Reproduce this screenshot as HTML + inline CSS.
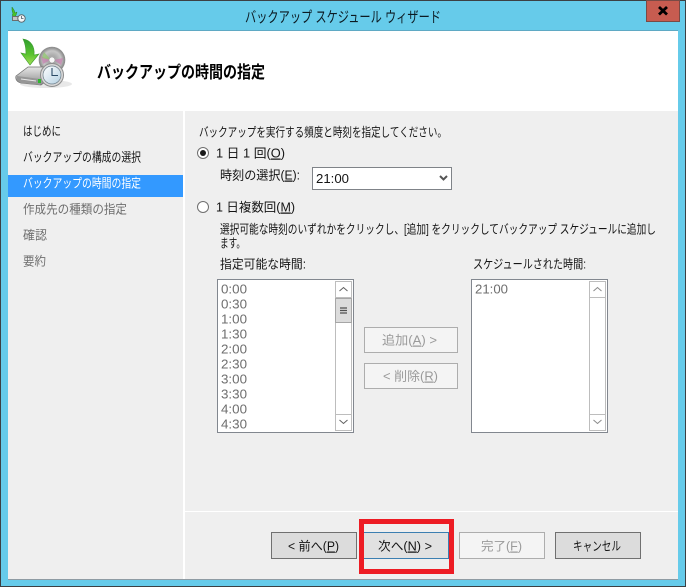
<!DOCTYPE html>
<html><head><meta charset="utf-8">
<style>
html,body{margin:0;padding:0;width:686px;height:587px;overflow:hidden;background:#66cbea}
svg{display:block}
text{font-family:"Liberation Sans","Noto Sans CJK JP",sans-serif;font-size:12.5px;fill:#141414;white-space:pre}
.g{fill:#6e6e6e}
.d{fill:#9a9a9a}
tspan.u{text-decoration:underline}
</style></head><body>
<svg width="686" height="587" viewBox="0 0 686 587" xmlns="http://www.w3.org/2000/svg">
<defs>
<linearGradient id="ar" x1="0" y1="0" x2="0" y2="1"><stop offset="0" stop-color="#2f9e2f"/><stop offset=".6" stop-color="#5cc42f"/><stop offset="1" stop-color="#a5e05a"/></linearGradient>
<linearGradient id="dr" x1="0" y1="0" x2="0" y2="1"><stop offset="0" stop-color="#e6e6e6"/><stop offset="1" stop-color="#8d8d8d"/></linearGradient>
<radialGradient id="cd"><stop offset="0" stop-color="#f2f2f2"/><stop offset=".3" stop-color="#a8a8a8"/><stop offset=".7" stop-color="#c6c6c6"/><stop offset="1" stop-color="#858585"/></radialGradient>
<linearGradient id="cl" x1="0" y1="0" x2="1" y2="1"><stop offset="0" stop-color="#ffffff"/><stop offset="1" stop-color="#b4d0e2"/></linearGradient>
</defs>

<!-- window frame -->
<rect width="686" height="587" fill="#66cbea"/>
<rect x="0" y="0" width="686" height="1" fill="#3c4043"/>
<rect x="0" y="0" width="1" height="587" fill="#3c4043"/>
<rect x="685" y="0" width="1" height="587" fill="#3c4043"/>
<rect x="0" y="586" width="686" height="1" fill="#3c4043"/>
<rect x="8" y="30" width="670" height="1" fill="#5fa9c4"/>
<rect x="8" y="579" width="670" height="1" fill="#8f9ba3"/>

<!-- client -->
<rect x="8" y="31" width="670" height="80" fill="#ffffff"/>
<rect x="8" y="111" width="670" height="468" fill="#ffffff"/>
<rect x="8" y="111" width="175" height="468" fill="#efefef"/>
<rect x="185" y="111" width="493" height="400" fill="#efefef"/>
<rect x="185" y="512" width="493" height="67" fill="#efefef"/>

<!-- close button -->
<rect x="646.500" y="0.500" width="33" height="21" fill="#c75c50" stroke="#7a4a45"/>
<path d="M659 7l8 7.500M667 7l-8 7.500" stroke="#000" stroke-width="2.800" fill="none"/>

<!-- small title icon -->
<path d="M12 7l2 3 1 3 2-1-2 6-3-3 1-1-1-4z" fill="#49c22a" stroke="#2a7a1a" stroke-width=".5"/>
<rect x="12.500" y="16.500" width="8" height="4" fill="#c4c4c4" stroke="#6d6d6d"/>
<circle cx="21.500" cy="18.500" r="3.700" fill="#f2f6f8" stroke="#5f6a70"/>
<path d="M21.500 16v2.500h2" stroke="#4a5a66" stroke-width=".8" fill="none"/>

<!-- title -->
<text x="245" y="22" style="font-size:15px;fill:#0c1a22" textLength="196" lengthAdjust="spacingAndGlyphs">バックアップ スケジュール ウィザード</text>

<!-- large icon -->
<ellipse cx="46" cy="84" rx="26" ry="4" fill="#d9d9d9" opacity=".6"/>
<circle cx="52" cy="60" r="13" fill="url(#cd)" stroke="#8f8f8f" stroke-width=".6"/>
<path d="M41 56l9 4-7 4zM63 58l-9 2 7 5z" fill="#c87fb0" opacity=".7"/>
<path d="M44 52l7 8-9-2z" fill="#8ec96b" opacity=".7"/>
<circle cx="52" cy="60" r="3" fill="#f8f8f8" stroke="#999" stroke-width=".6"/>
<path d="M23 39c8 1 12 8 11 16l5-1-9 11-9-12 5 1c0-6-1-11-3-15z" fill="url(#ar)" stroke="#3c9a2c" stroke-width=".6"/>
<path d="M16 76l12-9 24 0 0 10-11 8-20-2c-4-1-6-4-5-7z" fill="url(#dr)" stroke="#6f6f6f" stroke-width=".7"/>
<path d="M17 76l23 3 0 6-19-2c-3-1-5-4-4-7z" fill="#969696"/>
<path d="M21 79l15 2" stroke="#e8e8e8" stroke-width="1" fill="none"/>
<rect x="38" y="79" width="3" height="4" fill="#2eb82e"/>
<circle cx="52" cy="75" r="11.500" fill="#d8d8d8" stroke="#8c8c8c"/>
<circle cx="52" cy="75" r="9" fill="url(#cl)" stroke="#6e7f8a" stroke-width=".7"/>
<path d="M52 68v7.500h6" stroke="#2a4a66" stroke-width="1.100" fill="none"/>

<!-- heading -->
<text x="97" y="78" style="font-size:17px;font-weight:bold;fill:#000" textLength="168" lengthAdjust="spacingAndGlyphs">バックアップの時間の指定</text>

<!-- nav -->
<rect x="8" y="175" width="175" height="22" fill="#3399ff"/>
<text x="23" y="135.500" textLength="38" lengthAdjust="spacingAndGlyphs">はじめに</text>
<text x="23" y="161.500" textLength="118" lengthAdjust="spacingAndGlyphs">バックアップの構成の選択</text>
<text x="23" y="187.500" style="fill:#fff" textLength="118" lengthAdjust="spacingAndGlyphs">バックアップの時間の指定</text>
<text x="23" y="213.500" class="g" textLength="104" lengthAdjust="spacingAndGlyphs">作成先の種類の指定</text>
<text x="23" y="239.500" class="g" textLength="24" lengthAdjust="spacingAndGlyphs">確認</text>
<text x="23" y="265.500" class="g" textLength="23" lengthAdjust="spacingAndGlyphs">要約</text>

<!-- options -->
<text x="199" y="136.500" textLength="248" lengthAdjust="spacingAndGlyphs">バックアップを実行する頻度と時刻を指定してください。</text>
<circle cx="203" cy="153" r="5.500" fill="#fff" stroke="#6f6f6f"/>
<circle cx="203" cy="153" r="3" fill="#1a1a1a"/>
<text x="216" y="157.500" textLength="69" lengthAdjust="spacingAndGlyphs">1 日 1 回(<tspan class="u">O</tspan>)</text>
<text x="220" y="179.500" textLength="80" lengthAdjust="spacingAndGlyphs">時刻の選択(<tspan class="u">E</tspan>):</text>
<rect x="312.500" y="167.500" width="139" height="22" fill="#fff" stroke="#7f8388"/>
<text x="316" y="183" style="font-size:13px" textLength="33" lengthAdjust="spacingAndGlyphs">21:00</text>
<path d="M440 176l3.500 3.500 3.500-3.500" stroke="#555" stroke-width="2" fill="none"/>
<circle cx="203" cy="207" r="5.500" fill="#fff" stroke="#6f6f6f"/>
<text x="216" y="211.500" textLength="79" lengthAdjust="spacingAndGlyphs">1 日複数回(<tspan class="u">M</tspan>)</text>
<text x="220" y="233.500" textLength="436" lengthAdjust="spacingAndGlyphs">選択可能な時刻のいずれかをクリックし、[追加] をクリックしてバックアップ スケジュールに追加し</text>
<text x="220" y="247.500" textLength="25" lengthAdjust="spacingAndGlyphs">ます。</text>
<text x="220" y="268.500" textLength="86" lengthAdjust="spacingAndGlyphs">指定可能な時間:</text>
<text x="473" y="268.500" textLength="113" lengthAdjust="spacingAndGlyphs">スケジュールされた時間:</text>

<!-- list 1 -->
<rect x="217.500" y="279.500" width="136" height="153" fill="#fff" stroke="#82878f"/>
<rect x="335.500" y="281.500" width="16" height="149" fill="#fff" stroke="#bdbdbd"/>
<rect x="335.500" y="281.500" width="16" height="16" fill="#fff" stroke="#bdbdbd"/>
<rect x="335.500" y="414.500" width="16" height="16" fill="#fff" stroke="#bdbdbd"/>
<rect x="335.500" y="298.500" width="16" height="24" fill="#dcdcdc" stroke="#a6a6a6"/>
<path d="M340 308h7M340 310.500h7M340 313h7" stroke="#505050" stroke-width="1.200" fill="none"/>
<path d="M339.500 291l4-3.500 4 3.500M339.500 420l4 3.500 4-3.500" stroke="#606060" stroke-width="1" fill="none"/>
<text x="221" y="293.500" class="g" style="font-size:13px" textLength="26" lengthAdjust="spacingAndGlyphs">0:00</text>
<text x="221" y="308.500" class="g" style="font-size:13px" textLength="26" lengthAdjust="spacingAndGlyphs">0:30</text>
<text x="221" y="323.500" class="g" style="font-size:13px" textLength="26" lengthAdjust="spacingAndGlyphs">1:00</text>
<text x="221" y="338.500" class="g" style="font-size:13px" textLength="26" lengthAdjust="spacingAndGlyphs">1:30</text>
<text x="221" y="353.500" class="g" style="font-size:13px" textLength="26" lengthAdjust="spacingAndGlyphs">2:00</text>
<text x="221" y="368.500" class="g" style="font-size:13px" textLength="26" lengthAdjust="spacingAndGlyphs">2:30</text>
<text x="221" y="383.500" class="g" style="font-size:13px" textLength="26" lengthAdjust="spacingAndGlyphs">3:00</text>
<text x="221" y="398.500" class="g" style="font-size:13px" textLength="26" lengthAdjust="spacingAndGlyphs">3:30</text>
<text x="221" y="413.500" class="g" style="font-size:13px" textLength="26" lengthAdjust="spacingAndGlyphs">4:00</text>
<text x="221" y="428.500" class="g" style="font-size:13px" textLength="26" lengthAdjust="spacingAndGlyphs">4:30</text>

<!-- add/remove -->
<rect x="364.500" y="327.500" width="93" height="25" fill="#f4f4f4" stroke="#adadad"/>
<rect x="364.500" y="363.500" width="93" height="25" fill="#f4f4f4" stroke="#adadad"/>
<text x="382" y="344.500" class="d" textLength="55" lengthAdjust="spacingAndGlyphs">追加(<tspan class="u">A</tspan>) &gt;</text>
<text x="383" y="380.500" class="d" textLength="55" lengthAdjust="spacingAndGlyphs">&lt; 削除(<tspan class="u">R</tspan>)</text>

<!-- list 2 -->
<rect x="471.500" y="279.500" width="136" height="153" fill="#fff" stroke="#82878f"/>
<rect x="589.500" y="281.500" width="16" height="149" fill="#fff" stroke="#bdbdbd"/>
<rect x="589.500" y="281.500" width="16" height="16" fill="#fff" stroke="#bdbdbd"/>
<rect x="589.500" y="414.500" width="16" height="16" fill="#fff" stroke="#bdbdbd"/>
<path d="M593.500 291l4-3.500 4 3.500M593.500 420l4 3.500 4-3.500" stroke="#8a8a8a" stroke-width="1" fill="none"/>
<text x="475" y="293.500" class="g" style="font-size:13px" textLength="33" lengthAdjust="spacingAndGlyphs">21:00</text>

<!-- footer buttons -->
<rect x="271.500" y="532.500" width="85" height="26" fill="#dcdcdc" stroke="#707070"/>
<rect x="363.500" y="532.500" width="85" height="26" fill="#e1e1e1" stroke="#3c7fb1"/>
<rect x="459.500" y="532.500" width="85" height="26" fill="#f4f4f4" stroke="#adadad"/>
<rect x="555.500" y="532.500" width="85" height="26" fill="#dcdcdc" stroke="#707070"/>
<text x="288" y="550.500" textLength="51" lengthAdjust="spacingAndGlyphs">&lt; 前へ(<tspan class="u">P</tspan>)</text>
<text x="378" y="550.500" textLength="54" lengthAdjust="spacingAndGlyphs">次へ(<tspan class="u">N</tspan>) &gt;</text>
<text x="481" y="550.500" class="d" textLength="41" lengthAdjust="spacingAndGlyphs">完了(<tspan class="u">F</tspan>)</text>
<text x="573" y="550.500" textLength="48" lengthAdjust="spacingAndGlyphs">キャンセル</text>

<!-- red highlight -->
<rect x="361.500" y="521.500" width="90" height="50" fill="none" stroke="#ed1c24" stroke-width="5"/>
</svg>
</body></html>
